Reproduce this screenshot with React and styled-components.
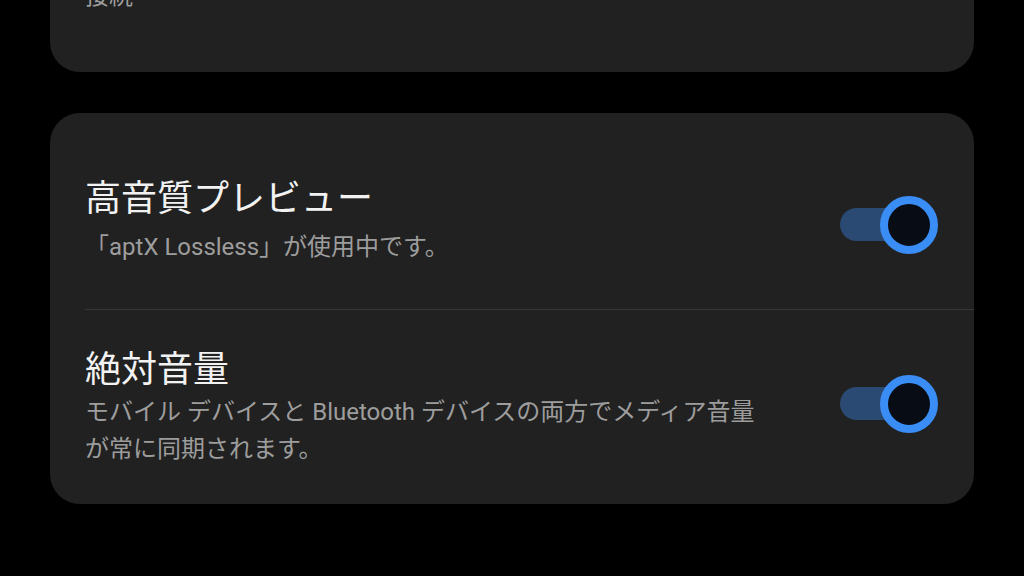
import React from "react";
import styled, { createGlobalStyle } from "styled-components";

const GlobalStyle = createGlobalStyle`
  html, body {
    margin: 0;
    padding: 0;
    background: #000;
    overflow: hidden;
  }
  body {
    font-family: Roboto, "Noto Sans CJK JP", sans-serif;
  }
`;

const Page = styled.div`
  width: 1024px;
  height: 576px;
  padding: 0 50px;
  box-sizing: border-box;
  display: flex;
  flex-direction: column;
  gap: 41px;
  margin-top: -22px;
`;

const Card = styled.section`
  background: #212121;
  border-radius: ${({ $top }) => ($top ? "0 0 30px 30px" : "30px")};
  display: flex;
  flex-direction: column;
`;

const Row = styled.div`
  display: flex;
  align-items: center;
  justify-content: space-between;
  padding: ${({ $pad }) => $pad || "36px 36px 35px 35px"};
`;

const TextCol = styled.div`
  display: flex;
  flex-direction: column;
  max-width: ${({ $max }) => $max || "680px"};
`;

const Title = styled.div`
  color: #f2f2f2;
  font-size: 36px;
  line-height: 46px;
`;

const Sub = styled.div`
  color: #9d9d9d;
  font-size: 24px;
  line-height: 37px;
  margin-top: ${({ $gap }) => $gap || "0"};
`;

const Divider = styled.div`
  height: 1px;
  background: #363636;
  margin-left: 35px;
`;

const Toggle = styled.div`
  position: relative;
  width: 98px;
  height: 58px;
  flex-shrink: 0;
  margin: ${({ $shift }) => ($shift > 0 ? `${$shift * 2}px 0 0` : `0 0 ${-$shift * 2}px`)};
`;

const Track = styled.div`
  position: absolute;
  left: 0;
  top: 12px;
  width: 76px;
  height: 33px;
  border-radius: 17px;
  background: #2b4a73;
`;

const Thumb = styled.div`
  position: absolute;
  right: 0;
  top: 0;
  width: 58px;
  height: 58px;
  box-sizing: border-box;
  border-radius: 50%;
  border: 8px solid #3b8df6;
  background: #080c15;
`;

const Switch = ({ shift = 0 }) => (
  <Toggle $shift={shift}>
    <Track />
    <Thumb />
  </Toggle>
);

export default function App() {
  return (
    <>
      <GlobalStyle />
      <Page>
        <Card $top>
          <Row $pad="0 36px 57px 35px">
            <TextCol>
              <Sub>接続</Sub>
            </TextCol>
          </Row>
        </Card>

        <Card>
          <Row $pad="63px 36px 43px 35px">
            <TextCol>
              <Title>高音質プレビュー</Title>
              <Sub $gap="7px">「aptX Lossless」が使用中です。</Sub>
            </TextCol>
            <Switch shift={4} />
          </Row>
          <Divider />
          <Row $pad="37px 36px 36px 35px">
            <TextCol>
              <Title>絶対音量</Title>
              <Sub $gap="1px">
                モバイル デバイスと Bluetooth デバイスの両方でメディア音量が常に同期されます。
              </Sub>
            </TextCol>
            <Switch shift={-4} />
          </Row>
        </Card>
      </Page>
    </>
  );
}
